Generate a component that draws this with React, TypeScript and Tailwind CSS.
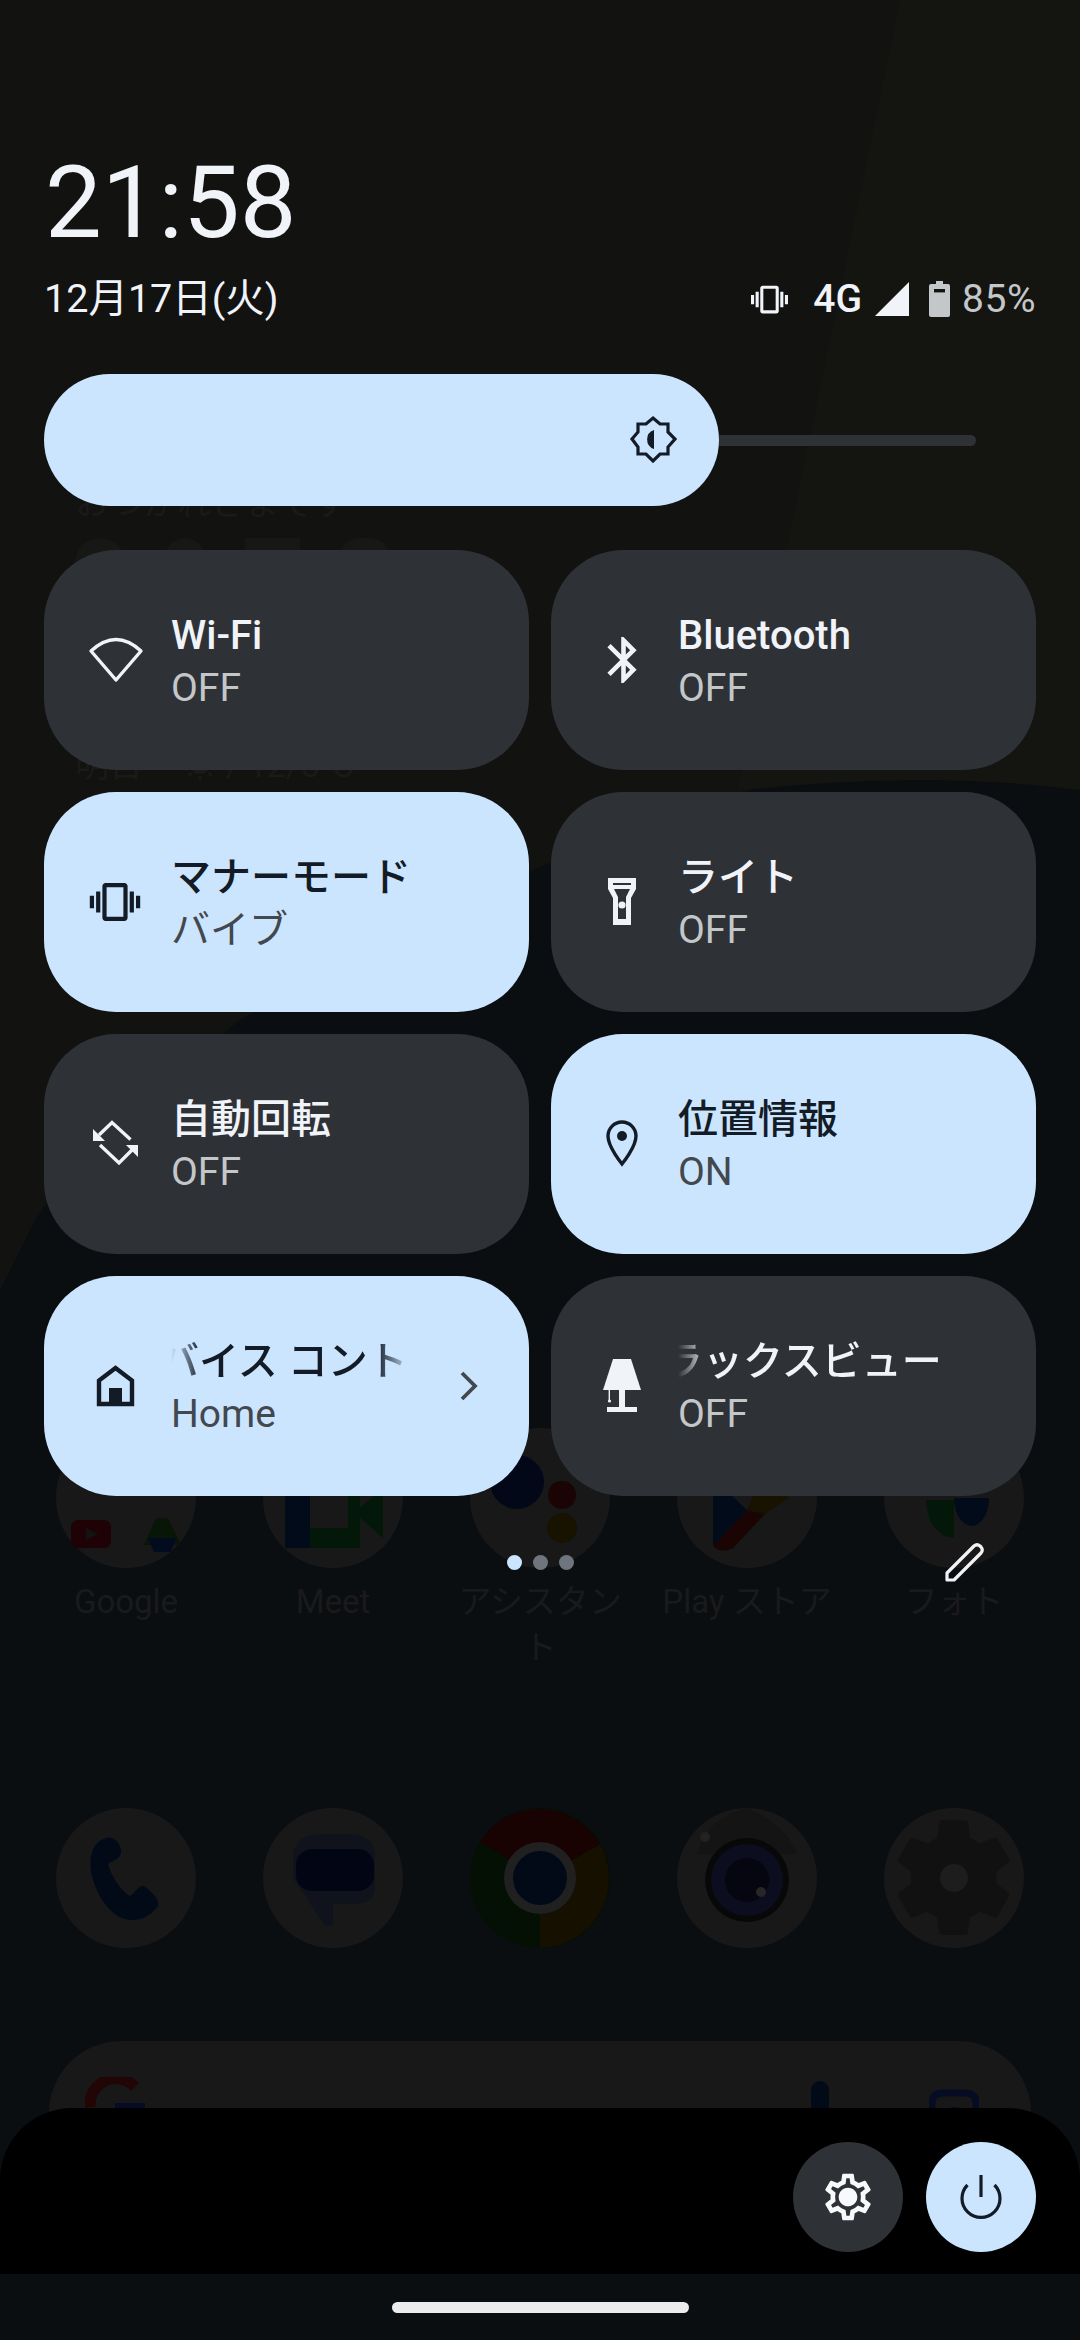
import type { ReactNode } from "react";

const FONT = "font-['Roboto','Noto_Sans_CJK_JP',sans-serif]";
const TILE_DARK = "#2e3136";

function Vibrate({ className }: { className: string }) {
  return (
    <svg viewBox="0 0 24 24" className={className} fill="currentColor">
      <path d="M0 15h2V9H0v6zm3 2h2V7H3v10zm19-8v6h2V9h-2zm-3 8h2V7h-2v10zM16.5 3h-9C6.67 3 6 3.67 6 4.5v15c0 .83.67 1.5 1.5 1.5h9c.83 0 1.5-.67 1.5-1.5v-15c0-.83-.67-1.5-1.5-1.5zM16 19H8V5h8v14z" />
    </svg>
  );
}

// tile icons all live in a 70x70 box centred on the icon slot
function TileIcon({ children }: { children: ReactNode }) {
  return (
    <svg viewBox="0 0 70 70" className="h-[70px] w-[70px] shrink-0">
      {children}
    </svg>
  );
}

const WifiIcon = (
  <TileIcon>
    <path d="M36 55 L11 26 Q36 3 61 26 Z" fill="none" stroke="#f0f3f8" strokeWidth="3.4" strokeLinejoin="round" />
  </TileIcon>
);

const BluetoothIcon = (
  <TileIcon>
    <path
      transform="translate(8.9 7.4) scale(2.3)"
      fill="#f0f3f8"
      d="M17.71 7.71L12 2h-1v7.59L6.41 5 5 6.41 10.59 12 5 17.59 6.41 19 11 14.41V22h1l5.71-5.71-4.3-4.29 4.3-4.29zM13 5.83l1.88 1.88L13 9.59V5.83zm1.88 10.46L13 18.17v-3.76l1.88 1.88z"
    />
  </TileIcon>
);

const VibrateIcon = (
  <TileIcon>
    <g transform="translate(9.8 9.8) scale(2.1)" fill="#131c26">
      <path d="M0 15h2V9H0v6zm3 2h2V7H3v10zm19-8v6h2V9h-2zm-3 8h2V7h-2v10zM16.5 3h-9C6.67 3 6 3.67 6 4.5v15c0 .83.67 1.5 1.5 1.5h9c.83 0 1.5-.67 1.5-1.5v-15c0-.83-.67-1.5-1.5-1.5zM16 19H8V5h8v14z" />
    </g>
  </TileIcon>
);

const FlashlightIcon = (
  <TileIcon>
    <g transform="translate(3 -2)">
      <path d="M18 13H46V24L41 33V60H23V33L18 24Z" fill="#f0f3f8" />
      <rect x="23" y="18" width="18" height="2" fill={TILE_DARK} />
      <path d="M24 24H40L36 32V54H28V32Z" fill={TILE_DARK} />
      <circle cx="32" cy="40" r="3.6" fill="#f0f3f8" />
    </g>
  </TileIcon>
);

const RotateIcon = (
  <TileIcon>
    <g fill="none" stroke="#f0f3f8" strokeWidth="3.4">
      <path d="M19 26 L32 13.5 L50.5 30.5" />
      <path d="M20 36 L39 54 L52 41" />
    </g>
    <path d="M13 20V32H25Z" fill="#f0f3f8" />
    <path d="M46 36H58V48Z" fill="#f0f3f8" />
  </TileIcon>
);

const LocationIcon = (
  <TileIcon>
    <path
      d="M35 55 C35 55 21 38 21 27 A14 14 0 0 1 49 27 C49 38 35 55 35 55Z"
      fill="none"
      stroke="#131c26"
      strokeWidth="3.4"
    />
    <circle cx="35" cy="27" r="5" fill="#131c26" />
  </TileIcon>
);

const HomeIcon = (
  <TileIcon>
    <g transform="translate(0 -1)">
      <path d="M35.5 18 L52 30.5 V54 H19 V30.5 Z" fill="none" stroke="#131c26" strokeWidth="4.4" />
      <rect x="29" y="38" width="13" height="16" fill="#131c26" />
    </g>
  </TileIcon>
);

const LampIcon = (
  <TileIcon>
    <g transform="translate(3 -1)" fill="#f0f3f8">
      <path d="M23 9H41L51 40H13Z" />
      <rect x="29" y="40" width="6" height="17" />
      <rect x="17" y="57" width="30" height="5" />
      <rect x="18.6" y="40" width="1.4" height="11" />
      <circle cx="19.5" cy="51" r="1.6" />
    </g>
  </TileIcon>
);

type TileProps = {
  title: string;
  subtitle: string;
  icon: ReactNode;
  active?: boolean;
  chevron?: boolean;
  // for the tiles caught mid-marquee
  marquee?: "device" | "lux";
};

function Tile({ title, subtitle, icon, active, chevron, marquee }: TileProps) {
  return (
    <div
      className={`flex h-[220px] items-center rounded-[72px] pl-[36px] ${active ? "bg-[#cce5ff]" : "bg-[#2e3136]"}`}
    >
      {icon}
      <div className="ml-[21px] flex min-w-0 flex-1 flex-col pt-[4px]">
        {marquee === "device" && (
          <div className="h-[53px] w-[240px] overflow-hidden [mask-image:linear-gradient(to_right,transparent,black_30px,black_205px,transparent_240px)]">
            <div className="-ml-[52px] whitespace-nowrap text-[40px] font-medium leading-[53px] text-[#131c26]">
              {title}
            </div>
          </div>
        )}
        {marquee === "lux" && (
          <div className="h-[53px] w-[300px] overflow-hidden [mask-image:linear-gradient(to_right,transparent,black_30px)]">
            <div className="-ml-[55px] whitespace-nowrap text-[40px] font-medium leading-[53px] text-[#f0f3f8]">
              {title}
            </div>
          </div>
        )}
        {!marquee && (
          <div
            className={`h-[53px] whitespace-nowrap text-[40px] font-medium leading-[53px] ${active ? "text-[#131c26]" : "text-[#f0f3f8]"}`}
          >
            {title}
          </div>
        )}
        <div
          className={`h-[53px] whitespace-nowrap text-[39px] leading-[53px] ${active ? "text-[#43474e]" : "text-[#c4c7c9]"}`}
        >
          {subtitle}
        </div>
      </div>
      {chevron && (
        <svg viewBox="0 0 20 30" className="mr-[50px] h-[30px] w-[20px] shrink-0">
          <path d="M3 2 L16 15 L3 28" fill="none" stroke="#43474e" strokeWidth="3.8" />
        </svg>
      )}
    </div>
  );
}

// ---- dimmed home screen behind the shade ----

function AppCircle({ children }: { children?: ReactNode }) {
  return (
    <svg viewBox="0 0 140 140" className="h-[140px] w-[140px]">
      <circle cx="70" cy="70" r="70" fill="#181818" />
      {children}
    </svg>
  );
}

function AppCell({ label, children }: { label?: string; children: ReactNode }) {
  return (
    <div className="flex flex-col items-center">
      {children}
      {label && (
        <div className="mt-[11px] w-[191px] text-center text-[33px] leading-[46px] text-[#1a1a1a]">{label}</div>
      )}
    </div>
  );
}

function HomeScreen() {
  return (
    <div className="absolute inset-0">
      <svg viewBox="0 0 1080 2340" className="absolute inset-0 h-full w-full">
        <path d="M0 0H1080V790Q930 770 750 790Q530 853 240 1020Q100 1130 35 1220L0 1290Z" fill="#121210" />
        <path d="M900 0H1080V790Q930 770 737 790Z" fill="#141411" />
      </svg>
      <div className="relative pl-[75px] pt-[478px] text-[34px] leading-[50px] text-[#1a1a18]">おつかれさまです</div>
      <div className="relative ml-[75px] mt-[10px] flex h-[30px] gap-[40px]">
        <div className="h-[60px] w-[50px] rounded-full bg-[#171715]" />
        <div className="h-[40px] w-[40px] rounded-full bg-[#171715]" />
        <div className="h-[40px] w-[55px] bg-[#171715]" />
        <div className="h-[40px] w-[50px] rounded-full bg-[#171715]" />
      </div>
      <div className="relative flex items-center gap-[40px] pl-[75px] pt-[174px] text-[34px] leading-[46px] text-[#1a1a18]">
        <span>明日</span>
        <span>☀ / 12/5°C</span>
      </div>

      <div className="relative mt-[640px] grid grid-cols-5 px-[22.5px]">
        <AppCell label="Google">
          <AppCircle>
            <rect x="15" y="92" width="40" height="28" rx="7" fill="#1f0205" />
            <path d="M30 100L42 106L30 112Z" fill="#131313" />
            <path d="M100 90H112L125 117H88Z" fill="#081608" />
            <path d="M92 110H120L115 124H98Z" fill="#030c1f" />
          </AppCircle>
        </AppCell>
        <AppCell label="Meet">
          <AppCircle>
            <rect x="22" y="60" width="25" height="60" fill="#020b1a" />
            <rect x="47" y="100" width="50" height="20" fill="#031808" />
            <path d="M85 60H97V80L120 60V110L97 90V100H85Z" fill="#031808" />
          </AppCircle>
        </AppCell>
        <AppCell label="アシスタント">
          <AppCircle>
            <circle cx="47" cy="54" r="27" fill="#020818" />
            <circle cx="92" cy="67" r="14" fill="#1b0404" />
            <circle cx="92" cy="100" r="15" fill="#181200" />
            <circle cx="110" cy="42" r="8" fill="#031806" />
          </AppCircle>
        </AppCell>
        <AppCell label="Play ストア">
          <AppCircle>
            <path d="M36 50V118L70 82Z" fill="#020b1a" />
            <path d="M36 118Q44 126 56 120L88 86L70 82Z" fill="#1b0404" />
            <path d="M70 82L88 86L112 70L84 50Z" fill="#181200" />
          </AppCircle>
        </AppCell>
        <AppCell label="フォト">
          <AppCircle>
            <path d="M42 72A28 38 0 0 0 70 110V72Z" fill="#031808" />
            <path d="M70 70H105A17.5 28 0 0 1 70 70Z" fill="#020b1a" />
            <path d="M35 60H70V68H35Z" fill="#181200" />
          </AppCircle>
        </AppCell>
      </div>

      <div className="relative mt-[137px] grid grid-cols-5 px-[22.5px]">
        <AppCell>
          <AppCircle>
            <path
              d="M50 30C36 34 32 50 36 68C42 92 58 112 76 112C88 112 96 106 102 98C104 92 96 84 88 78C84 76 80 84 74 88C66 84 56 70 52 56C58 52 66 50 65 42C63 34 58 28 50 30Z"
              fill="#020a18"
            />
          </AppCircle>
        </AppCell>
        <AppCell>
          <AppCircle>
            <path d="M62 118L30 70V50Q30 26 60 26H85Q112 26 112 50V80Q112 96 88 96H70V118Z" fill="#10131c" />
            <rect x="33" y="41" width="78" height="42" rx="16" fill="#020614" />
          </AppCircle>
        </AppCell>
        <AppCell>
          <svg viewBox="0 0 140 140" className="h-[140px] w-[140px]">
            <circle cx="70" cy="70" r="70" fill="#051005" />
            <path d="M70 70L130 36A70 70 0 0 1 70 140Z" fill="#151000" />
            <path d="M70 70L10 34A70 70 0 0 1 130 36Z" fill="#180202" />
            <circle cx="70" cy="70" r="36" fill="#202020" />
            <circle cx="70" cy="70" r="27" fill="#020a18" />
          </svg>
        </AppCell>
        <AppCell>
          <AppCircle>
            <path d="M20 46H120Q108 16 70 0Q30 10 20 46Z" fill="#141414" />
            <circle cx="28" cy="29" r="5" fill="#222222" />
            <circle cx="70" cy="72" r="42" fill="#080808" />
            <circle cx="70" cy="72" r="36" fill="#0d0d20" />
            <circle cx="70" cy="72" r="22" fill="#060610" />
            <circle cx="84" cy="84" r="5" fill="#262626" />
          </AppCircle>
        </AppCell>
        <AppCell>
          <AppCircle>
            <path
              transform="translate(-2 -2) scale(5.97)"
              fill="#111111"
              d="M19.14 12.94c.04-.3.06-.61.06-.94 0-.32-.02-.64-.07-.94l2.03-1.58c.18-.14.23-.41.12-.61l-1.92-3.32c-.12-.22-.37-.29-.59-.22l-2.39.96c-.5-.38-1.03-.7-1.62-.94l-.36-2.54c-.04-.24-.24-.41-.48-.41h-3.84c-.24 0-.43.17-.47.41l-.36 2.54c-.59.24-1.13.57-1.62.94l-2.39-.96c-.22-.08-.47 0-.59.22L2.74 8.87c-.12.21-.08.47.12.61l2.03 1.58c-.05.3-.09.63-.09.94s.02.64.07.94l-2.03 1.58c-.18.14-.23.41-.12.61l1.92 3.32c.12.22.37.29.59.22l2.39-.96c.5.38 1.03.7 1.62.94l.36 2.54c.05.24.24.41.48.41h3.84c.24 0 .44-.17.47-.41l.36-2.54c.59-.24 1.13-.56 1.62-.94l2.39.96c.22.08.47 0 .59-.22l1.92-3.32c.12-.22.07-.47-.12-.61l-2.01-1.58z"
            />
            <circle cx="70" cy="70" r="14" fill="#1d1d1d" />
          </AppCircle>
        </AppCell>
      </div>

      <div className="relative mx-[49px] mt-[93px] flex h-[160px] items-start rounded-[72px] bg-[#181818] pt-[36px] pl-[36px] pr-[52px]">
        <svg viewBox="0 0 60 60" className="h-[60px] w-[60px]">
          <path d="M8 40A26 26 0 0 1 50 10" fill="none" stroke="#220505" strokeWidth="11" />
          <path d="M8 42V30" stroke="#1c1602" strokeWidth="11" />
          <rect x="30" y="26" width="30" height="9" fill="#050c24" />
        </svg>
        <div className="ml-auto mt-[4px] h-[60px] w-[18px] rounded-full bg-[#020a18]" />
        <svg viewBox="0 0 50 50" className="ml-[100px] mt-[6px] h-[50px] w-[50px]">
          <path d="M3 50V20Q3 10 14 10H36Q47 10 47 20V50" fill="none" stroke="#050c24" strokeWidth="7" />
          <circle cx="25" cy="32" r="8" fill="#050c24" />
        </svg>
      </div>
    </div>
  );
}

export default function App() {
  return (
    <div className={`relative h-[2340px] w-[1080px] overflow-hidden bg-[#0a0e11] ${FONT}`}>
      <HomeScreen />

      <div className="relative flex h-full flex-col">
        <div className="ml-[45px] mt-[153px] h-[100px] text-[101px] leading-[100px] text-[#f0f3f8]">21:58</div>

        <div className="mt-[21px] flex h-[50px] items-center pl-[44px] pr-[44px]">
          <span className="text-[39.5px] leading-[50px] text-[#f0f3f8]">12月17日(火)</span>
          <Vibrate className="ml-auto h-[37px] w-[37px] text-[#f0f3f8]" />
          <span className="ml-[25px] text-[39px] font-medium leading-[50px] text-[#f0f3f8]">4G</span>
          <svg viewBox="0 0 34 34" className="ml-[13px] h-[34px] w-[34px]">
            <path d="M34 0V34H0Z" fill="#f0f3f8" />
          </svg>
          <svg viewBox="0 0 21 36" className="ml-[20px] h-[36px] w-[21px]">
            <path d="M7 0H14V3H19Q21 3 21 5V34Q21 36 19 36H2Q0 36 0 34V5Q0 3 2 3H7Z" fill="#c4c7c9" />
            <rect x="5" y="8" width="11" height="3.4" fill="#131310" />
          </svg>
          <span className="ml-[12px] text-[39px] leading-[50px] tracking-[0.5px] text-[#c4c7c9]">85%</span>
        </div>

        <div className="ml-[44px] mt-[50px] flex items-center">
          <div className="flex h-[132px] w-[675px] items-center justify-end rounded-full bg-[#cce5ff] pr-[29px]">
            <svg viewBox="0 0 70 70" className="h-[70px] w-[70px]">
              <path
                d="M33 13L40 19H48V27L55 34L48 42V49H40L33 56L26 49H18V42L12 34L18 27V19H26Z"
                fill="none"
                stroke="#131c26"
                strokeWidth="3.2"
              />
              <path d="M34 25A10 10 0 0 0 34 44Z" fill="#131c26" />
            </svg>
          </div>
          <div className="h-[11px] w-[257px] rounded-r-full bg-[#2e3136]" />
        </div>

        <div className="mx-[44px] mt-[44px] grid grid-cols-2 gap-[22px]">
          <Tile title="Wi-Fi" subtitle="OFF" icon={WifiIcon} />
          <Tile title="Bluetooth" subtitle="OFF" icon={BluetoothIcon} />
          <Tile title="マナーモード" subtitle="バイブ" icon={VibrateIcon} active />
          <Tile title="ライト" subtitle="OFF" icon={FlashlightIcon} />
          <Tile title="自動回転" subtitle="OFF" icon={RotateIcon} />
          <Tile title="位置情報" subtitle="ON" icon={LocationIcon} active />
          <Tile title="デバイス コントロール" subtitle="Home" icon={HomeIcon} active chevron marquee="device" />
          <Tile title="ブラックスビュー" subtitle="OFF" icon={LampIcon} marquee="lux" />
        </div>

        <div className="relative mt-[46px] flex h-[40px] items-center justify-center gap-[11px]">
          <div className="h-[15px] w-[15px] rounded-full bg-[#cce5ff]" />
          <div className="h-[15px] w-[15px] rounded-full bg-[#6e757c]" />
          <div className="h-[15px] w-[15px] rounded-full bg-[#6e757c]" />
          <svg viewBox="0 0 40 40" className="absolute right-[95px] top-0 h-[40px] w-[40px]" fill="none" stroke="#f0f3f8" strokeWidth="3.2">
            <path d="M2 38V31L29 4Q32 1.5 35 4L36 5Q38.5 8 36 11L9 38Z" strokeLinejoin="round" />
          </svg>
        </div>

        <div className="mt-auto flex h-[166px] items-start justify-end gap-[23px] rounded-t-[72px] bg-black pr-[44px] pt-[34px]">
          <div className="flex h-[110px] w-[110px] items-center justify-center rounded-full bg-[#2e3136]">
            <svg viewBox="0 0 24 24" className="h-[56px] w-[56px]" fill="#f8f9fb">
              <path d="M19.43 12.98c.04-.32.07-.64.07-.98 0-.34-.03-.66-.07-.98l2.11-1.65c.19-.15.24-.42.12-.64l-2-3.46c-.09-.16-.26-.25-.44-.25-.06 0-.12.01-.17.03l-2.49 1c-.52-.4-1.08-.73-1.69-.98l-.38-2.65C14.46 2.18 14.25 2 14 2h-4c-.25 0-.46.18-.49.42l-.38 2.65c-.61.25-1.17.59-1.69.98l-2.49-1c-.06-.02-.12-.03-.18-.03-.17 0-.34.09-.43.25l-2 3.46c-.13.22-.07.49.12.64l2.11 1.65c-.04.32-.07.65-.07.98 0 .33.03.66.07.98l-2.11 1.65c-.19.15-.24.42-.12.64l2 3.46c.09.16.26.25.44.25.06 0 .12-.01.17-.03l2.49-1c.52.4 1.08.73 1.69.98l.38 2.65c.03.24.24.42.49.42h4c.25 0 .46-.18.49-.42l.38-2.65c.61-.25 1.17-.59 1.69-.98l2.49 1c.06.02.12.03.18.03.17 0 .34-.09.43-.25l2-3.46c.12-.22.07-.49-.12-.64l-2.11-1.65zm-1.98-1.71c.04.31.05.52.05.73 0 .21-.02.43-.05.73l-.14 1.13.89.7 1.08.84-.7 1.21-1.27-.51-1.04-.42-.9.68c-.43.32-.84.56-1.25.73l-1.06.43-.16 1.13-.2 1.35h-1.4l-.19-1.35-.16-1.13-1.06-.43c-.43-.18-.83-.41-1.23-.71l-.91-.7-1.06.43-1.27.51-.7-1.21 1.08-.84.89-.7-.14-1.13c-.03-.31-.05-.54-.05-.74s.02-.43.05-.73l.14-1.13-.89-.7-1.08-.84.7-1.21 1.27.51 1.04.42.9-.68c.43-.32.84-.56 1.25-.73l1.06-.43.16-1.13.2-1.35h1.39l.19 1.35.16 1.13 1.06.43c.43.18.83.41 1.23.71l.91.7 1.06-.43 1.27-.51.7 1.21-1.07.85-.89.7.14 1.13zM12 8c-2.21 0-4 1.79-4 4s1.79 4 4 4 4-1.79 4-4-1.79-4-4-4z" />
            </svg>
          </div>
          <div className="flex h-[110px] w-[110px] items-center justify-center rounded-full bg-[#cce5ff]">
            <svg viewBox="0 0 54 54" className="h-[54px] w-[54px]" fill="none" stroke="#131c26" strokeWidth="3.2">
              <path d="M27 5V27" />
              <path d="M13.5 15A19 19 0 1 0 40.5 15" />
            </svg>
          </div>
        </div>

        <div className="flex h-[66px] items-center justify-center">
          <div className="h-[11px] w-[297px] rounded-full bg-[#ececec]" />
        </div>
      </div>
    </div>
  );
}
